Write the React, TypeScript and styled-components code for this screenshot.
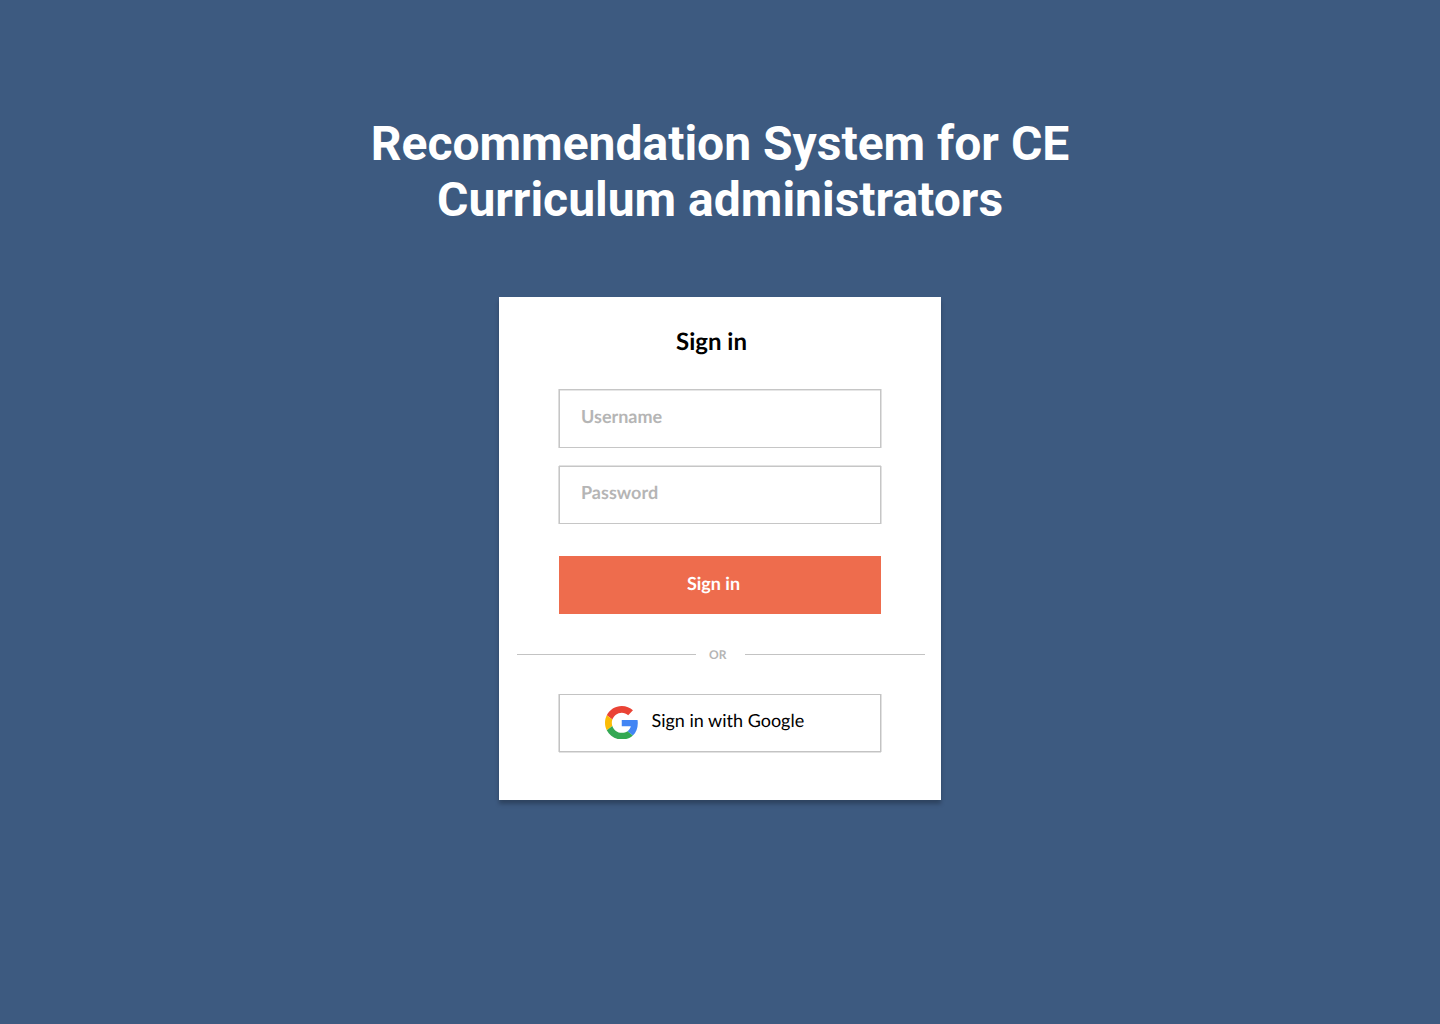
import React from 'react';
import styled, { createGlobalStyle } from 'styled-components';

const Global = createGlobalStyle`
  * { box-sizing: border-box; }
  body { margin: 0; background: #3d5a80; }
`;

const Page = styled.main`
  min-height: 1024px;
  display: flex;
  flex-direction: column;
  align-items: center;
  padding-top: 116px;
  background: #3d5a80;
`;

const Heading = styled.h1`
  margin: 0;
  width: 760px;
  text-align: center;
  font: 700 48px/56px Roboto, sans-serif;
  color: #fff;
`;

const Card = styled.form`
  margin: 69px 0 0;
  width: 442px;
  height: 503px;
  display: flex;
  flex-direction: column;
  align-items: center;
  background: #fff;
  box-shadow: 0 4px 4px rgba(0, 0, 0, 0.25);
  font-family: Lato, sans-serif;
  text-rendering: geometricPrecision;
`;

const Title = styled.h2`
  margin: 30px 17px 0 0;
  font-size: 24px;
  line-height: 29px;
  font-weight: 700;
  color: #000;
`;

const Field = styled.input<{ $gap: number; $height: number; $edge: string }>`
  margin: ${(p) => p.$gap}px 0 0;
  width: 322px;
  height: ${(p) => p.$height}px;
  padding: 0 21px 5px;
  border: 1px solid #c6c6c6;
  border-radius: 0;
  box-shadow: -1px 0 #dedede, 1px 0 #e2e2e2, ${(p) => p.$edge};
  background: #fff;
  font: 700 18px/22px Lato, sans-serif;
  text-rendering: inherit;
  &::placeholder { color: #b5b5b5; opacity: 1; }
`;

const PasswordField = styled(Field)`
  padding-bottom: 6px;
`;

const Submit = styled.button`
  margin: 32px 0 0;
  width: 322px;
  height: 58px;
  padding: 0 13px 4px 0;
  border: 0;
  background: #ee6c4d;
  color: #fff;
  font: 700 18px/22px Lato, sans-serif;
  text-rendering: inherit;
`;

const Divider = styled.div`
  margin: 32px 0 0 1px;
  width: 408px;
  height: 16px;
  display: flex;
  align-items: center;
  font-size: 12px;
  line-height: 14px;
  font-weight: 700;
  color: #b5b5b5;
`;

const DividerText = styled.span`
  width: 49px;
  padding: 1px 0 0 13.5px;
`;

const Rule = styled.span<{ $width: number }>`
  width: ${(p) => p.$width}px;
  height: 1px;
  background: #c3c3c3;
`;

const GoogleButton = styled.button`
  margin: 32px 0 0;
  width: 322px;
  height: 58px;
  display: flex;
  align-items: center;
  gap: 13px;
  padding: 0 0 1px 45px;
  border: 1px solid #c3c3c3;
  box-shadow: -1px 0 #dedede, 1px 0 #e2e2e2, 0 1px #e2e2e2;
  background: #fff;
  color: #000;
  font: 400 18px/22px Lato, sans-serif;
  text-rendering: inherit;
`;

const GoogleLabel = styled.span`
  padding-bottom: 5px;
`;

const GoogleLogo = () => (
  <svg width="33.5" height="33.5" viewBox="0 0 48 48">
    <path fill="#EA4335" d="M24 9.5c3.54 0 6.71 1.22 9.21 3.6l6.85-6.85C35.9 2.38 30.47 0 24 0 14.62 0 6.51 5.38 2.56 13.22l7.98 6.19C12.43 13.72 17.74 9.5 24 9.5z" />
    <path fill="#4285F4" d="M46.98 24.55c0-1.57-.15-3.09-.38-4.55H24v9.02h12.94c-.58 2.96-2.26 5.48-4.78 7.18l7.73 6c4.51-4.18 7.09-10.36 7.09-17.65z" />
    <path fill="#FBBC05" d="M10.53 28.59c-.48-1.45-.76-2.99-.76-4.59s.27-3.14.76-4.59l-7.98-6.19C.92 16.46 0 20.12 0 24c0 3.88.92 7.54 2.56 10.78l7.97-6.19z" />
    <path fill="#34A853" d="M24 48c6.48 0 11.93-2.13 15.89-5.81l-7.73-6c-2.15 1.45-4.92 2.3-8.16 2.3-6.26 0-11.57-4.22-13.47-9.91l-7.98 6.19C6.51 42.62 14.62 48 24 48z" />
  </svg>
);

export default function App() {
  return (
    <>
      <Global />
      <Page>
        <Heading>Recommendation System for CE Curriculum administrators</Heading>
        <Card onSubmit={(e) => e.preventDefault()}>
          <Title>Sign in</Title>
          <Field $gap={33} $height={59} $edge="inset 0 1px #e6e6e6" placeholder="Username" />
          <PasswordField $gap={18} $height={58} $edge="0 -1px #e2e2e2" type="password" placeholder="Password" />
          <Submit>Sign in</Submit>
          <Divider>
            <Rule $width={179} />
            <DividerText>OR</DividerText>
            <Rule $width={180} />
          </Divider>
          <GoogleButton type="button">
            <GoogleLogo />
            <GoogleLabel>Sign in with Google</GoogleLabel>
          </GoogleButton>
        </Card>
      </Page>
    </>
  );
}
